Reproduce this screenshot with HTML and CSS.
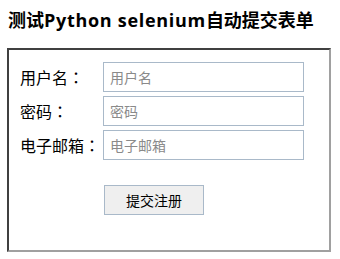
FILE: index.html
```html
<!DOCTYPE html>
<html lang="zh-CN">
<head>
<meta charset="utf-8">
<link rel="stylesheet" href="styles.css">
</head>
<body>
<h1 class="title">测试<span class="latin">Python selenium</span>自动提交表单</h1>
<form class="panel">
  <div class="rows">
    <label class="label" for="u">用户名<span class="colon" lang="zh-Hant">：</span></label>
    <input class="field" id="u" type="text" placeholder="用户名">
    <label class="label" for="p">密码<span class="colon" lang="zh-Hant">：</span></label>
    <input class="field" id="p" type="password" placeholder="密码">
    <label class="label" for="e">电子邮箱<span class="colon" lang="zh-Hant">：</span></label>
    <input class="field" id="e" type="text" placeholder="电子邮箱">
  </div>
  <div class="actions">
    <button class="submit" type="button">提交注册</button>
  </div>
</form>
</body>
</html>
```

FILE: styles.css
```css
html, body {
  margin: 0;
  padding: 0;
  background: #fff;
}
body {
  font-family: "Noto Sans CJK SC", "Noto Sans", sans-serif;
  color: #000;
}
.title {
  margin: 0;
  padding: 8px 0 0 8px;
  height: 48px;
  box-sizing: border-box;
  font-family: "Open Sans", "Noto Sans CJK SC", sans-serif;
  font-size: 18px;
  line-height: 24px;
  font-weight: 700;
}
.latin {
  letter-spacing: 0.7px;
}
.panel {
  margin: 0 0 0 7px;
  width: 324px;
  height: 204px;
  box-sizing: border-box;
  border: 2px solid;
  border-color: #404040 #a0a0a0 #a0a0a0 #404040;
  padding: 12px 0 0 11px;
}
.rows {
  display: grid;
  grid-template-columns: 83px 201px;
  grid-auto-rows: 30px;
  row-gap: 4px;
  align-items: center;
}
.label {
  font-size: 16px;
  line-height: 20px;
}
.colon {
  font-family: "Noto Sans CJK TC", "Noto Sans CJK JP", sans-serif;
}
.field {
  box-sizing: border-box;
  width: 201px;
  height: 30px;
  margin: 0;
  border: 1px solid #a9b9c9;
  padding: 0 0 0 6px;
  font-family: "Noto Sans CJK SC", sans-serif;
  font-size: 14px;
  color: #000;
  outline: none;
  background: #fff;
}
.field::placeholder {
  color: #8a8a8a;
}
.actions {
  padding: 25px 0 0 84px;
}
.submit {
  box-sizing: border-box;
  width: 100px;
  height: 30px;
  margin: 0;
  border: 1px solid #a9b9c9;
  background: #efefef;
  font-family: "Noto Sans CJK SC", sans-serif;
  font-size: 14px;
  color: #000;
  padding: 0;
}
```
